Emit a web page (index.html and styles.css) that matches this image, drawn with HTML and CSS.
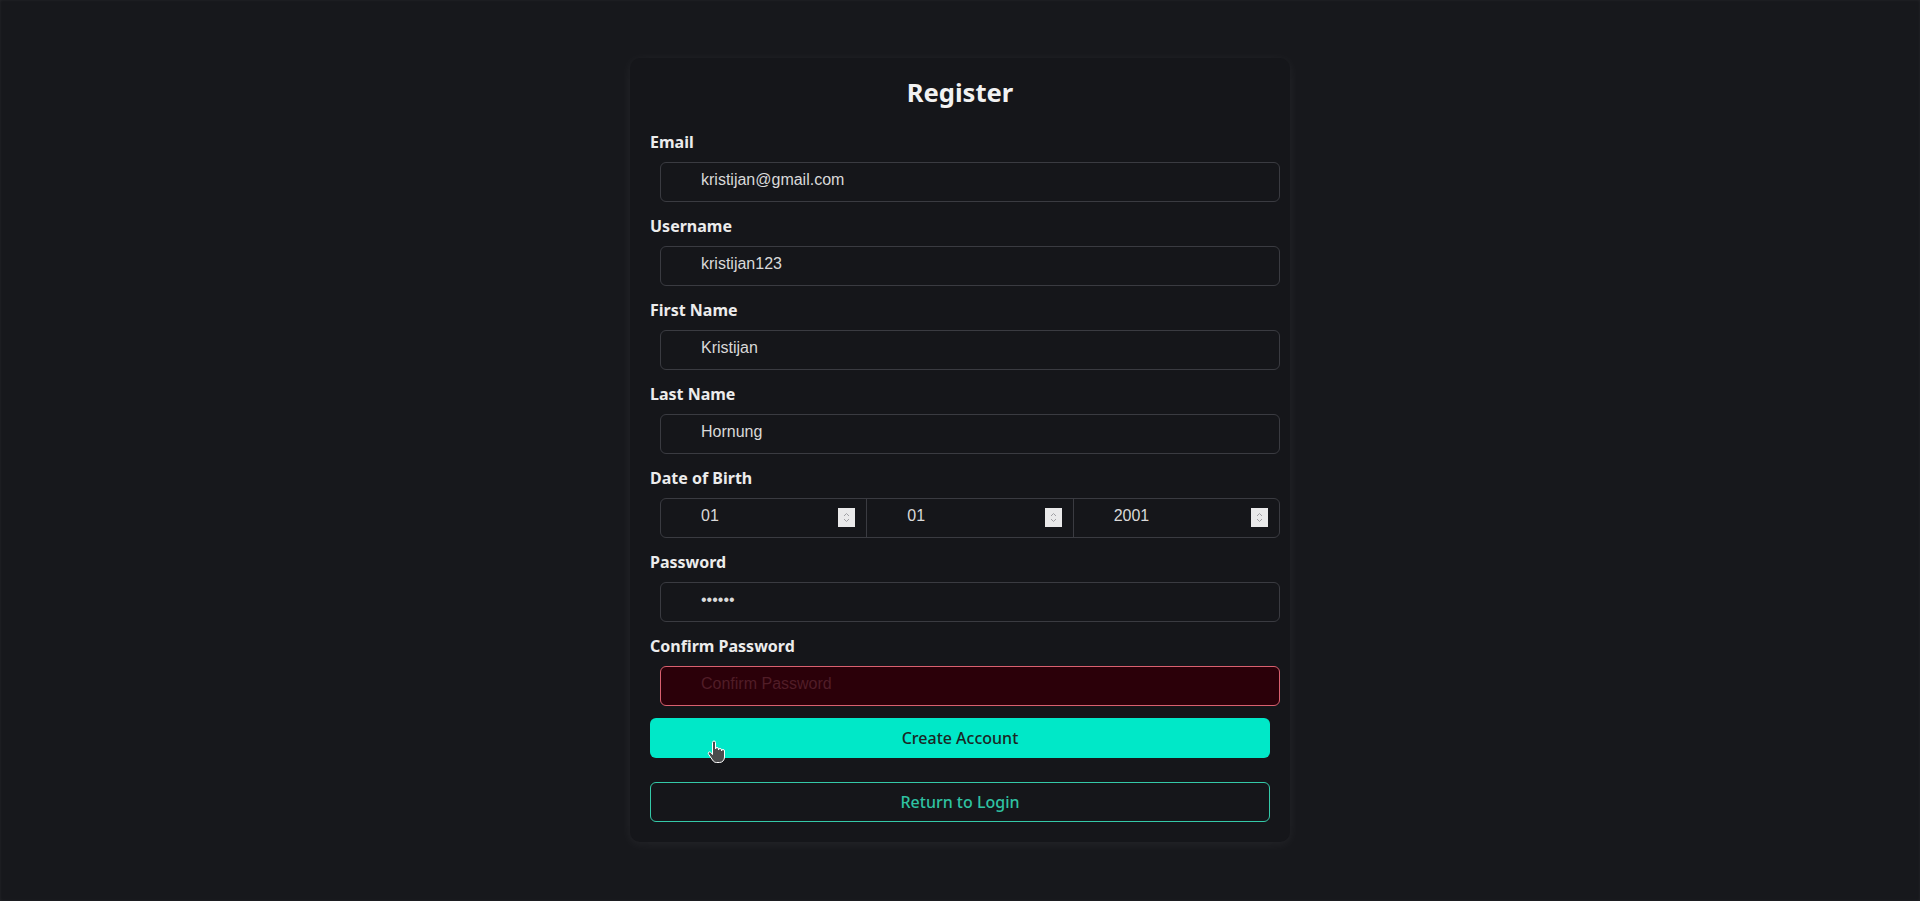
FILE: index.html
```html
<!DOCTYPE html>
<html lang="en">
<head>
<meta charset="utf-8">
<title>Register</title>
<link rel="stylesheet" href="styles.css">
</head>
<body>
<div class="page">
  <form class="card">
    <h2 class="title">Register</h2>

    <div class="field">
      <label class="label">Email</label>
      <input class="input" type="text" value="kristijan@gmail.com">
    </div>

    <div class="field">
      <label class="label">Username</label>
      <input class="input" type="text" value="kristijan123">
    </div>

    <div class="field">
      <label class="label">First Name</label>
      <input class="input" type="text" value="Kristijan">
    </div>

    <div class="field">
      <label class="label">Last Name</label>
      <input class="input" type="text" value="Hornung">
    </div>

    <div class="field">
      <label class="label">Date of Birth</label>
      <div class="date-group">
        <div class="seg">
          <input class="seg-input" type="text" value="01">
          <span class="spin"><svg width="17" height="19" viewBox="0 0 17 19"><rect width="17" height="19" fill="#e9e9ea"/><polyline points="6,8 8.5,5.5 11,8" fill="none" stroke="#a0a0a4" stroke-width="1"/><polyline points="6,11 8.5,13.5 11,11" fill="none" stroke="#a0a0a4" stroke-width="1"/></svg></span>
        </div>
        <div class="seg">
          <input class="seg-input" type="text" value="01">
          <span class="spin"><svg width="17" height="19" viewBox="0 0 17 19"><rect width="17" height="19" fill="#e9e9ea"/><polyline points="6,8 8.5,5.5 11,8" fill="none" stroke="#a0a0a4" stroke-width="1"/><polyline points="6,11 8.5,13.5 11,11" fill="none" stroke="#a0a0a4" stroke-width="1"/></svg></span>
        </div>
        <div class="seg">
          <input class="seg-input" type="text" value="2001">
          <span class="spin"><svg width="17" height="19" viewBox="0 0 17 19"><rect width="17" height="19" fill="#e9e9ea"/><polyline points="6,8 8.5,5.5 11,8" fill="none" stroke="#a0a0a4" stroke-width="1"/><polyline points="6,11 8.5,13.5 11,11" fill="none" stroke="#a0a0a4" stroke-width="1"/></svg></span>
        </div>
      </div>
    </div>

    <div class="field">
      <label class="label">Password</label>
      <input class="input" type="password" value="123456">
    </div>

    <div class="field field-last">
      <label class="label">Confirm Password</label>
      <input class="input input-error" type="password" placeholder="Confirm Password">
    </div>

    <button class="btn btn-primary" type="button">Create Account</button>
    <button class="btn btn-outline" type="button">Return to Login</button>

    <svg class="cursor" width="22" height="24" viewBox="0 0 22 24"><path d="M6.5 2.5a1.5 1.5 0 0 1 3 0V9a1.5 1.5 0 0 1 3 0v1a1.5 1.5 0 0 1 3 0v1a1.5 1.5 0 0 1 3 0v6c0 3-2 5.5-5 5.5h-3c-2 0-3-1-4-2.5L2.6 14.2a1.4 1.4 0 0 1 2.2-1.8L6.5 14.5Z" fill="#4b4b4d" stroke="#ffffff" stroke-width="1" stroke-linejoin="round"/></svg>
  </form>
</div>
</body>
</html>
```

FILE: styles.css
```css
html, body {
  margin: 0;
  padding: 0;
  background: #17181c;
}

body {
  font-family: "Noto Sans", "Open Sans", sans-serif;
  color: #ececec;
}

.page {
  min-height: 100vh;
  display: flex;
  align-items: center;
  justify-content: center;
  box-sizing: border-box;
  padding-bottom: 2px;
  box-shadow: inset 0 0 3px rgba(255, 255, 255, 0.07);
}

.card {
  position: relative;
  width: 660px;
  box-sizing: border-box;
  padding: 17px 20px 20px;
  background: #15161a;
  border-radius: 10px;
  box-shadow: 0 2px 12px rgba(255, 255, 255, 0.06);
}

.title {
  margin: 0 0 21px;
  font-size: 25.6px;
  font-weight: 700;
  line-height: normal;
  text-align: center;
  color: #f2f2f2;
}

.field {
  display: block;
}

.label {
  display: block;
  font-size: 16px;
  font-weight: 700;
  line-height: normal;
  margin-bottom: 9px;
  color: #ececec;
}

.input {
  display: block;
  width: 100%;
  height: 40px;
  box-sizing: border-box;
  margin: 0 0 13px 10px;
  padding: 5px 10px 9px 40px;
  border: 1px solid #3a3b41;
  border-radius: 6px;
  background: transparent;
  color: #d9d9d9;
  font-family: "Liberation Sans", Arial, sans-serif;
  font-size: 16px;
  outline: none;
}

.field-last .input {
  margin-bottom: 12px;
}

.input-error {
  background: #2b0009;
  border-color: #d9606f;
}

.input-error::placeholder {
  color: #511d27;
}

.date-group {
  display: flex;
  width: 100%;
  height: 40px;
  box-sizing: border-box;
  margin: 0 0 13px 10px;
  border: 1px solid #3a3b41;
  border-radius: 6px;
  overflow: hidden;
}

.seg {
  flex: 1 1 0;
  min-width: 0;
  display: flex;
  align-items: center;
  padding-right: 11px;
}

.seg + .seg {
  border-left: 1px solid #3a3b41;
}

.seg-input {
  flex: 1 1 0;
  width: 0;
  min-width: 0;
  height: 38px;
  box-sizing: border-box;
  border: 0;
  padding: 5px 10px 9px 40px;
  background: transparent;
  color: #d9d9d9;
  font-family: "Liberation Sans", Arial, sans-serif;
  font-size: 16px;
  outline: none;
}

.spin {
  flex: 0 0 17px;
  display: flex;
  width: 17px;
  height: 19px;
}

.btn {
  display: block;
  width: 100%;
  height: 40px;
  box-sizing: border-box;
  border-radius: 6px;
  font-family: "Noto Sans", "Open Sans", sans-serif;
  font-size: 16px;
  font-weight: 500;
  cursor: pointer;
}

.btn-primary {
  margin: 0 0 24px;
  border: 0;
  background: #00e8c8;
  color: #1b2624;
}

.btn-outline {
  margin: 0;
  border: 1px solid #34c9a8;
  background: transparent;
  color: #2fc2a2;
}

.cursor {
  position: absolute;
  left: 76px;
  top: 682px;
}
```
